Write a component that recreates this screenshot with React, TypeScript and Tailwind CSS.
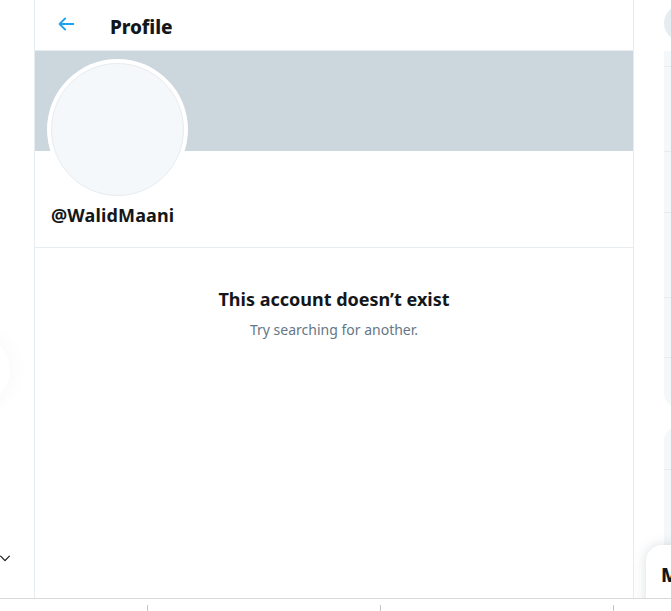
import React from 'react'

const font = { fontFamily: '"Noto Sans", "Open Sans", Arial, sans-serif' }

const BackArrow = () => (
  <svg viewBox="0 0 24 24" className="w-[22px] h-[22px] fill-[#1da1f2]">
    <path d="M20 11H7.414l4.293-4.293a1 1 0 0 0-1.414-1.414l-6 6a1 1 0 0 0 0 1.414l6 6a.996.996 0 0 0 1.414 0 1 1 0 0 0 0-1.414L7.414 13H20a1 1 0 1 0 0-2z" />
  </svg>
)

const Chevron = () => (
  <svg viewBox="0 0 24 24" className="w-[14px] h-[14px] fill-[#14171a]">
    <path d="M20.207 8.147a1 1 0 0 0-1.414 0L12 14.94 5.207 8.147a1 1 0 0 0-1.414 1.414l7.5 7.5a.996.996 0 0 0 1.414 0l7.5-7.5a1 1 0 0 0 0-1.414z" />
  </svg>
)

const App = () => {
  return (
    <div className="w-[671px] h-[611px] bg-white flex flex-col overflow-hidden text-[#14171a]" style={font}>
      <div className="h-[598px] flex">
        {/* left nav edge */}
        <div className="w-[34px] relative overflow-hidden">
          <div className="absolute left-[-70px] top-[335px] w-[80px] h-[70px] rounded-full shadow-[0_0_24px_rgba(0,0,0,0.04)]" />
          <div className="absolute left-[-2px] top-[551px]">
            <Chevron />
          </div>
        </div>

        {/* main column */}
        <div className="w-[600px] border-l border-r border-[#e6ecf0] flex flex-col">
          <div className="h-[51px] flex items-center pl-[20px] pt-[1px] border-b border-[#e6ecf0]">
            <div className="-mt-[3px]">
              <BackArrow />
            </div>
            <h1 className="ml-[33px] mt-[3px] text-[19px] font-extrabold leading-none tracking-[-0.1px]">Profile</h1>
          </div>
          <div className="h-[100px] bg-[#ccd6dd]" />
          <div className="px-[12px] border-b border-[#e6ecf0] pb-[20px]">
            <div className="-mt-[92px] w-[141px] h-[141px] rounded-full bg-white p-[4px]">
              <div className="w-full h-full rounded-full bg-[#f5f8fa] border border-[#e6ecf0]" />
            </div>
            <div className="mt-[3px] pl-[4px] text-[18px] font-bold leading-[24px] tracking-[0.15px]">@WalidMaani</div>
          </div>
          <div className="flex flex-col items-center pt-[38px]">
            <div className="text-[18px] font-bold leading-[26px]">This account doesn’t exist</div>
            <div className="mt-[8px] text-[14px] text-[#657786] leading-[20px]">Try searching for another.</div>
          </div>
        </div>

        {/* right sidebar edge */}
        <div className="flex-1 relative overflow-hidden">
          <div className="absolute left-[30px] top-[5px] w-[40px] h-[36px] rounded-full bg-[#e6ecf0]" />
          <div className="absolute left-[30px] top-[51px] w-[60px] h-[356px] bg-[#f5f8fa] rounded-bl-[14px] flex flex-col">
            <div className="h-[16px] border-b border-[#e6ecf0]" />
            <div className="h-[85px] border-b border-[#e6ecf0]" />
            <div className="h-[61px] border-b border-[#e6ecf0]" />
            <div className="h-[85px] border-b border-[#e6ecf0]" />
            <div className="h-[60px] border-b border-[#e6ecf0]" />
          </div>
          <div className="absolute left-[30px] top-[427px] w-[60px] h-[200px] bg-[#f5f8fa] rounded-tl-[14px]">
            <div className="h-[43px] border-b border-[#e6ecf0]" />
          </div>
          <div className="absolute left-[12px] top-[545px] w-[80px] h-[80px] bg-white rounded-tl-[16px] shadow-[0_0_12px_rgba(101,119,134,0.25)] pl-[15px] pt-[16px]">
            <span className="text-[19px] font-extrabold">Messages</span>
          </div>
        </div>
      </div>

      {/* bottom bar */}
      <div className="flex-1 border-t border-[#d9d9d9] relative">
        <div className="flex h-full">
          <div className="w-[147px]" />
          <div className="w-px h-[6px] mt-[6px] bg-[#c8c8c8]" />
          <div className="w-[232px]" />
          <div className="w-px h-[6px] mt-[6px] bg-[#c8c8c8]" />
          <div className="w-[232px]" />
          <div className="w-px h-[6px] mt-[6px] bg-[#c8c8c8]" />
        </div>
      </div>
    </div>
  )
}

export default App
